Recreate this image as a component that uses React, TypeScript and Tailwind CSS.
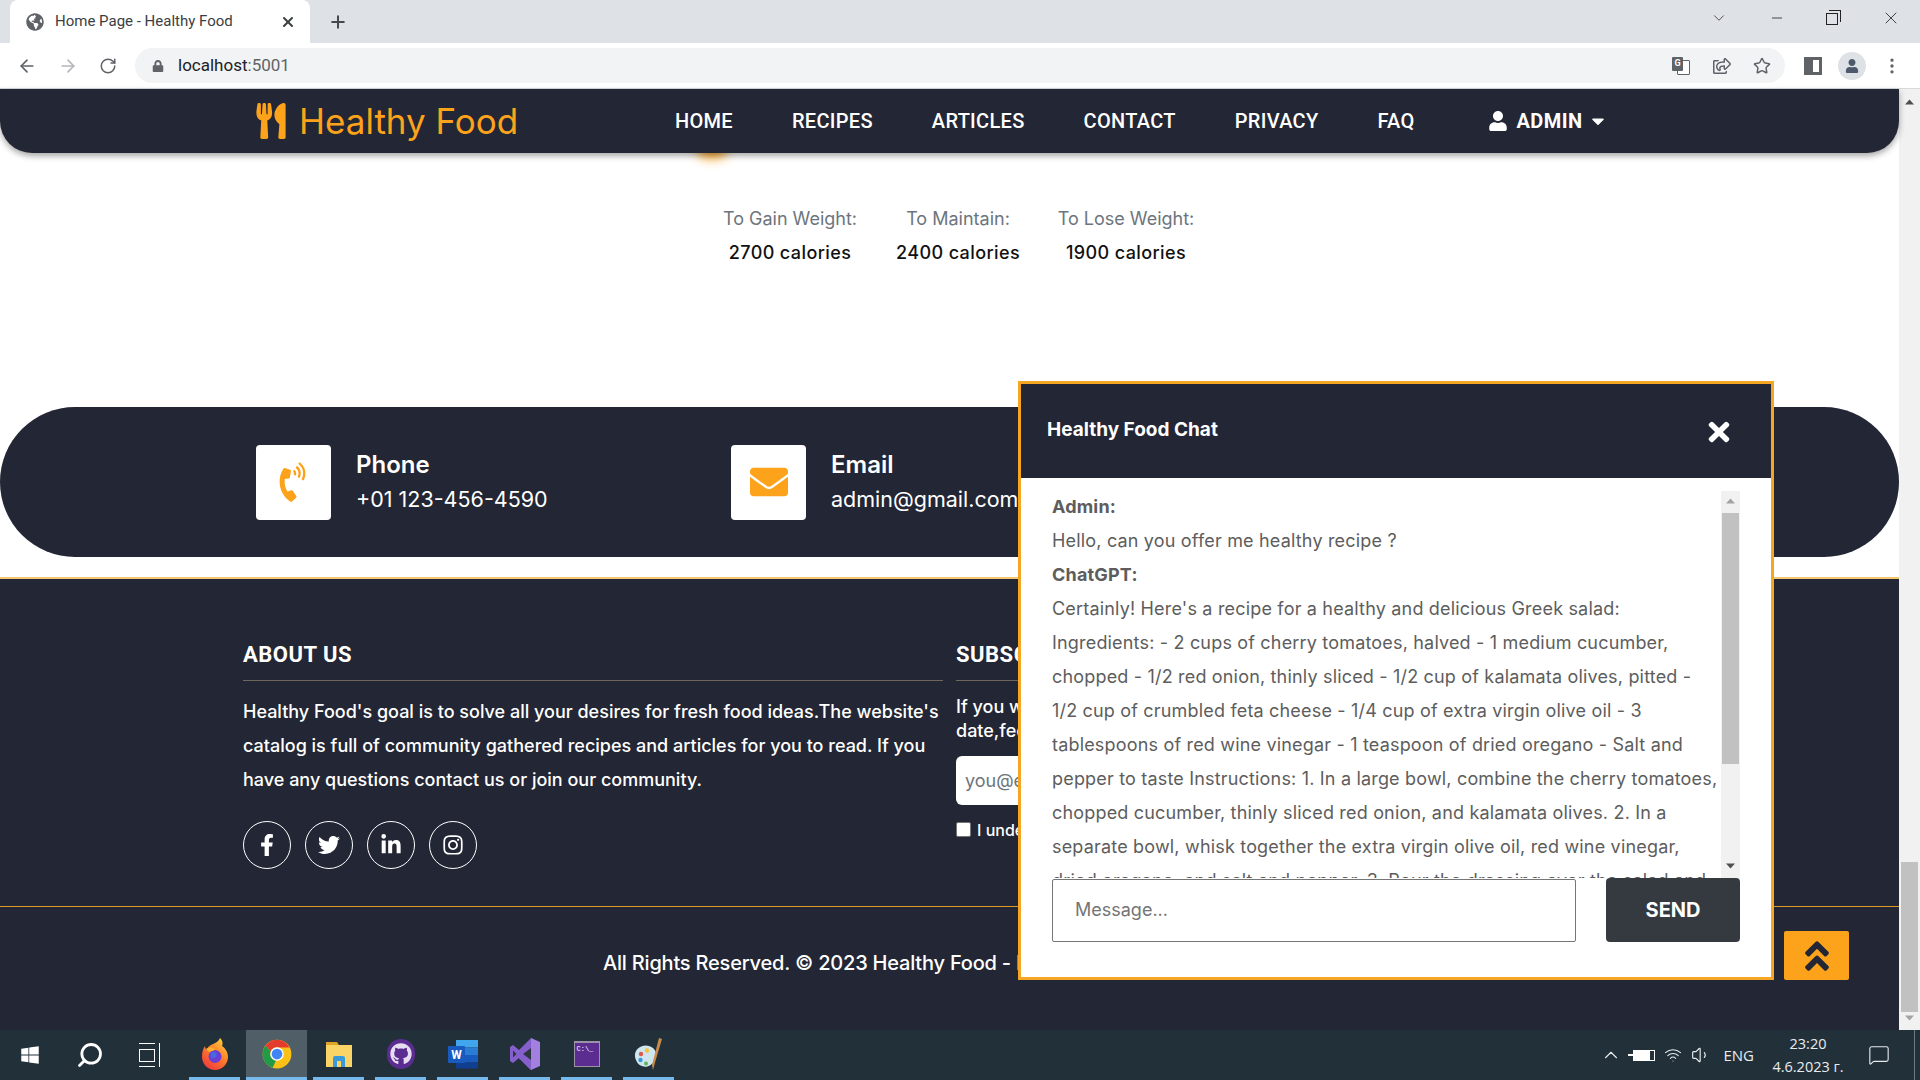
import React from 'react';
import {
  FaAngleDoubleUp, FaCaretDown, FaEnvelope, FaFacebookF, FaGithub, FaGlobeAmericas, FaInstagram,
  FaLinkedinIn, FaLock, FaPhoneVolume, FaRegShareSquare, FaTimes, FaTwitter, FaUser, FaUtensils, FaWindows,
} from 'react-icons/fa';
import { ArrowLeft, ArrowRight, ChevronDown, ChevronUp, EllipsisVertical, MessageSquare, Minus, Plus, RotateCw, Search, Star, Volume1, Wifi, X } from 'lucide-react';

const navLinks = ['HOME', 'RECIPES', 'ARTICLES', 'CONTACT', 'PRIVACY', 'FAQ'];

const calories = [
  { label: 'To Gain Weight:', value: '2700 calories' },
  { label: 'To Maintain:', value: '2400 calories' },
  { label: 'To Lose Weight:', value: '1900 calories' },
];

const aboutLines = [
  "Healthy Food's goal is to solve all your desires for fresh food ideas.The website's",
  'catalog is full of community gathered recipes and articles for you to read. If you',
  'have any questions contact us or join our community.',
];

const answerLines = [
  "Certainly! Here's a recipe for a healthy and delicious Greek salad:",
  'Ingredients: - 2 cups of cherry tomatoes, halved - 1 medium cucumber,',
  'chopped - 1/2 red onion, thinly sliced - 1/2 cup of kalamata olives, pitted -',
  '1/2 cup of crumbled feta cheese - 1/4 cup of extra virgin olive oil - 3',
  'tablespoons of red wine vinegar - 1 teaspoon of dried oregano - Salt and',
  'pepper to taste Instructions: 1. In a large bowl, combine the cherry tomatoes,',
  'chopped cucumber, thinly sliced red onion, and kalamata olives. 2. In a',
  'separate bowl, whisk together the extra virgin olive oil, red wine vinegar,',
  'dried oregano, and salt and pepper. 3. Pour the dressing over the salad and',
];

const socials = [FaFacebookF, FaTwitter, FaLinkedinIn, FaInstagram];

const Triangle = ({ up, className }: { up?: boolean; className: string }) => (
  <svg width="9" height="6" viewBox="0 0 9 6" className={className}>
    <path d={up ? 'M4.5 0.5 9 5.5H0z' : 'M0 0.5h9L4.5 5.5z'} fill="currentColor" />
  </svg>
);

const Firefox = () => (
  <svg width="30" height="34" viewBox="0 0 30 34">
    <defs>
      <linearGradient id="ff" x1="0.8" y1="0" x2="0.2" y2="1">
        <stop offset="0" stopColor="#ffd23a" />
        <stop offset="0.5" stopColor="#ff7a2b" />
        <stop offset="1" stopColor="#f0353f" />
      </linearGradient>
    </defs>
    <path d="M20 1c3 3 3 6 2 8 3 2 6 6 6 11 0 7-6 13-13 13S2 27 2 20c0-5 1-8 3-11 0 2 1 3 2 4 1-4 4-5 6-6 3-1 6-3 7-6z" fill="url(#ff)" />
    <circle cx="15" cy="19.5" r="6.5" fill="#6b3fd4" />
    <circle cx="13.5" cy="18" r="3" fill="#3d6fe0" />
    <path d="M6 12c3-2 7-2 9 1l-6 2z" fill="#ffb02e" />
  </svg>
);

const Chrome = () => (
  <svg width="30" height="30" viewBox="0 0 24 24">
    <circle cx="12" cy="12" r="11.5" fill="#fbc116" />
    <path d="M12 .5A11.5 11.5 0 0 1 22 6.75H12a5.25 5.25 0 0 0-5 3.5L2.8 5.1A11.5 11.5 0 0 1 12 .5z" fill="#e33b2e" />
    <path d="M2.8 5.1 7 10.25a5.25 5.25 0 0 0 4.2 7L8.5 23A11.5 11.5 0 0 1 2.8 5.1z" fill="#229a47" />
    <circle cx="12" cy="12" r="5.4" fill="#fff" />
    <circle cx="12" cy="12" r="4.3" fill="#3f85f3" />
  </svg>
);

const FolderIcon = () => (
  <svg width="30" height="30" viewBox="0 0 30 30">
    <path d="M2 3h11l2 3h-13z" fill="#e0a526" />
    <rect x="2" y="6" width="26" height="22" fill="#fbd467" />
    <path d="M9 28v-9a2 2 0 0 1 2-2h8a2 2 0 0 1 2 2v9h-4v-6h-4v6z" fill="#3a9ad9" />
  </svg>
);

const Word = () => (
  <svg width="30" height="32" viewBox="0 0 30 32">
    <rect x="8" y="2" width="22" height="7.5" fill="#41a5ee" />
    <rect x="8" y="9.5" width="22" height="7.5" fill="#2b7cd3" />
    <rect x="8" y="17" width="22" height="7.5" fill="#185abd" />
    <rect x="8" y="24.5" width="22" height="6" fill="#103f91" />
    <rect x="0" y="8" width="17" height="17" rx="1" fill="#185abd" />
    <text x="8.5" y="21" textAnchor="middle" fontSize="12" fontWeight="700" fill="#fff" fontFamily="Roboto, sans-serif">W</text>
  </svg>
);

const VisualStudio = () => (
  <svg width="30" height="34" viewBox="0 0 30 34">
    <path d="M21 1 30 5v24l-9 4-12-12 12-9z" fill="#a37fe0" />
    <path d="M21 1v32L9 21 3 26 0 24V10l3-2 6 5z" fill="#8560cc" />
    <path d="M21 11v12l-8-6z" fill="#2b3640" />
    <path d="M3 13.5v7l3.5-3.5z" fill="#2b3640" />
  </svg>
);

const Terminal = () => (
  <div className="w-[26px] h-[26px] bg-[#5c2d91] border-t-2 border-[#9a93a8] border-x border-b flex items-start pl-[2px] pt-[2px] text-[7px] leading-[8px] text-white font-['Liberation_Mono',monospace]">C:\_</div>
);

const Palette = () => (
  <svg width="30" height="38" viewBox="0 0 30 38">
    <path d="M1 22C0 13 9 9 15 11c7 2 9 9 6 14-3 6-9 8-13 6-4-1-6-5-7-9z" fill="#cfe6ee" />
    <circle cx="7" cy="19" r="2.2" fill="#e2574c" />
    <circle cx="13" cy="15.5" r="2.2" fill="#f5c33b" />
    <circle cx="6.5" cy="25" r="2.2" fill="#3a9ad9" />
    <circle cx="12" cy="28.5" r="2" fill="#63b35a" />
    <path d="M18 30 25 3l3 1-6 20-3 11z" fill="#c98b4a" />
  </svg>
);

const taskbarApps = [
  { icon: <Firefox />, active: false },
  { icon: <Chrome />, active: true },
  { icon: <FolderIcon />, active: false },
  { icon: <div className="w-7 h-[30px] rounded-full bg-[#5c2d91] flex items-center justify-center text-[#e6ddf2]"><FaGithub size={22} /></div>, active: false },
  { icon: <Word />, active: false },
  { icon: <VisualStudio />, active: false },
  { icon: <Terminal />, active: false },
  { icon: <Palette />, active: false },
];

const App = () => {
  return (
    <div className="w-[1920px] h-[1080px] flex flex-col overflow-hidden bg-white font-['Inter',sans-serif]">
      {/* Tab strip */}
      <div className="h-[43px] bg-[#dee1e6] flex items-end pl-[10px] text-[#45494e] font-['Roboto',sans-serif]">
        <div className="w-[300px] h-[43px] bg-white rounded-t-lg flex items-center pl-[16px] pr-[14px] text-[15px] mb-0">
          <FaGlobeAmericas size={18} className="text-[#5f6368] shrink-0" />
          <span className="ml-[11px] flex-1 text-[#3c4043]">Home Page - Healthy Food</span>
          <X size={16} strokeWidth={3} className="text-[#3c4043]" />
        </div>
        <div className="h-[43px] flex items-center ml-[18px]"><Plus size={20} strokeWidth={2.4} /></div>
        <div className="flex-1" />
        <div className="h-[36px] self-start flex items-center text-[#222]">
          <ChevronDown size={18} strokeWidth={1} className="mr-[41px]" />
          <Minus size={16} strokeWidth={1.2} className="mr-[41px]" />
          <div className="w-3 h-3 border border-[#222] relative mr-[43px] mt-[2px]">
            <div className="absolute -top-[4px] left-[2px] w-3 h-3 border-t border-r border-[#222]" />
          </div>
          <X size={20} strokeWidth={1} className="mr-[19px]" />
        </div>
      </div>

      {/* Toolbar */}
      <div className="h-[46px] bg-white flex items-center text-[#5f6368] border-b border-[#d7d9dc] font-['Roboto',sans-serif]">
        <ArrowLeft size={20} className="ml-[17px]" />
        <ArrowRight size={20} className="ml-[21px] text-[#b4b6b9]" />
        <RotateCw size={18} className="ml-[21px]" />
        <div className="ml-[18px] w-[1650px] h-[35px] rounded-full bg-[#f1f3f4] flex items-center pl-[17px] pr-[14px]">
          <FaLock size={12} className="text-[#5f6368]" />
          <span className="ml-[14px] text-[17px] text-[#202124]">localhost<span className="text-[#5f6368]">:5001</span></span>
          <div className="flex-1" />
          <div className="relative w-[18px] h-[18px]">
            <div className="absolute left-[5px] top-[3px] w-[13px] h-[15px] bg-white border border-[#5f6368] rounded-[1px]" />
            <div className="absolute left-0 top-0 w-[11px] h-[14px] bg-[#5f6368] text-white text-[9px] font-bold flex items-center justify-center rounded-[1px]">G</div>
          </div>
          <FaRegShareSquare size={18} className="ml-[23px]" />
          <Star size={18} className="ml-[22px]" strokeWidth={2} />
        </div>
        <div className="ml-[19px] w-[18px] h-[18px] border-[3px] border-l-[9px] border-[#5f6368]" />
        <div className="ml-[16px] w-[28px] h-[28px] rounded-full bg-[#dee1e6] flex items-center justify-center text-[#4c5a6b]"><FaUser size={14} /></div>
        <EllipsisVertical size={20} className="ml-[16px]" />
      </div>

      {/* Page */}
      <div className="relative flex-1 flex min-h-0">
        <div className="w-[1899px] flex flex-col">
          <header className="relative z-10 h-[64px] shrink-0 bg-[#232634] rounded-b-[32px] shadow-[0_3px_6px_rgba(0,0,0,0.35)] flex items-center pl-[253px] text-white">
            <FaUtensils size={36} className="text-[#fda31b]" />
            <span className="ml-[10px] w-[376px] text-[35px] text-[#fda31b] font-['Inter',sans-serif]">Healthy Food</span>
            <nav className="flex items-center gap-[59px] text-[20px] font-medium tracking-[0.3px] font-['Roboto',sans-serif]">
              {navLinks.map((link) => <a key={link}>{link}</a>)}
            </nav>
            <div className="ml-[73px] flex items-center font-bold text-[20px] tracking-[0.4px] font-['Roboto',sans-serif]">
              <FaUser size={20} />
              <span className="ml-[9px]">ADMIN</span>
              <FaCaretDown size={20} className="ml-[6px]" />
            </div>
          </header>

          {/* spinner glow peeking out under the navbar */}
          <div className="absolute left-[697px] top-[51px] w-[30px] h-[18px] rounded-full bg-[#fda31b] blur-[6px]" />

          <section className="pt-[49px] pl-[706px] flex shrink-0 text-[18px] leading-[34px] text-center">
            {calories.map((item) => (
              <div key={item.label} className="w-[168px]">
                <div className="text-[#6c757d]">{item.label}</div>
                <div className="font-medium text-[#111] tracking-[0.4px]">{item.value}</div>
              </div>
            ))}
          </section>

          <section className="mt-[137px] h-[150px] shrink-0 rounded-full bg-[#232634] flex items-center pl-[256px] text-white font-['Inter',sans-serif]">
            <div className="w-[475px] flex items-center">
              <div className="w-[75px] h-[75px] bg-white rounded-[4px] flex items-center justify-center text-[#fda31b]">
                <FaPhoneVolume size={37} className="-rotate-12" />
              </div>
              <div className="ml-[25px]">
                <div className="text-[24px] font-semibold leading-[34px]">Phone</div>
                <div className="text-[21.5px] leading-[34px]">+01 123-456-4590</div>
              </div>
            </div>
            <div className="flex items-center">
              <div className="w-[75px] h-[75px] bg-white rounded-[4px] flex items-center justify-center text-[#fda31b]">
                <FaEnvelope size={38} />
              </div>
              <div className="ml-[25px]">
                <div className="text-[24px] font-semibold leading-[34px]">Email</div>
                <div className="text-[21.5px] leading-[34px]">admin@gmail.com</div>
              </div>
            </div>
          </section>

          <footer className="mt-[20px] flex-1 bg-[#232634] border-t-2 border-[#f3c76f] text-white">
            <div className="h-[328px] border-b border-[#e09a27] pl-[243px] pt-[58px] flex">
              <div className="w-[700px]">
                <h4 className="text-[22px] font-bold leading-[36px] border-b border-[#6f665d] h-[44px] font-['Roboto',sans-serif] tracking-[0.5px]">ABOUT US</h4>
                <div className="mt-[14px] text-[18px] leading-[34px] font-medium">
                  {aboutLines.map((line) => <div key={line} className="whitespace-nowrap">{line}</div>)}
                </div>
                <div className="mt-[24px] flex gap-[14px]">
                  {socials.map((Icon, i) => (
                    <a key={i} className="w-12 h-12 rounded-full border border-white flex items-center justify-center">
                      <Icon size={22} />
                    </a>
                  ))}
                </div>
              </div>
              <div className="ml-[13px] w-[400px]">
                <h4 className="text-[22px] font-bold leading-[36px] border-b border-[#6f665d] h-[44px] font-['Roboto',sans-serif] tracking-[0.5px]">SUBSCRIBE</h4>
                <div className="mt-[14px] text-[18px] leading-[24px] font-medium">If you want to stay up to<br />date,feel free to subscribe</div>
                <div className="mt-[13px] h-[49px] bg-white rounded-[6px] flex items-center pl-[9px] text-[#6c757d] text-[18px]">you@email.com</div>
                <label className="mt-[13px] flex items-center text-[16px] font-medium">
                  <span className="w-[15px] h-[15px] -mt-[2px] bg-white rounded-[2px] border border-[#767676]" />
                  <span className="ml-[6px]">I understand</span>
                </label>
              </div>
            </div>
            <div className="pl-[603px] pt-[40px] text-[20px] leading-[32px] font-medium tracking-[-0.2px]">All Rights Reserved. © 2023 Healthy Food - Privacy Policy</div>
          </footer>
        </div>

        {/* Page scrollbar */}
        <div className="w-[21px] bg-[#f1f1f1] flex flex-col items-center text-[#505050]">
          <Triangle up className="mt-[10px]" />
          <div className="mt-[757px] w-[17px] h-[150px] bg-[#c1c1c1]" />
          <Triangle className="mt-[3px] text-[#a3a3a3]" />
        </div>

        {/* Back to top */}
        <button className="absolute left-[1784px] top-[842px] w-[65px] h-[49px] bg-[#fda31b] rounded-[2px] flex items-center justify-center text-[#232634]">
          <FaAngleDoubleUp size={38} />
        </button>

        {/* Chat window */}
        <div className="absolute left-[1018px] top-[292px] w-[756px] h-[599px] bg-white border-[3px] border-[#f5a623] flex flex-col z-20">
          <div className="h-[94px] shrink-0 bg-[#232634] flex items-center justify-between pl-[26px] pr-[37px] text-white">
            <span className="text-[19px] font-bold -mt-[1px]">Healthy Food Chat</span>
            <FaTimes size={30} className="mt-[1px]" />
          </div>
          <div className="h-[401px] shrink-0 pt-[13px] pl-[31px] pr-[31px] flex text-[18px] leading-[34px] text-[#5d5d5d] tracking-[0.18px]">
            <div className="flex-1 h-[388px] overflow-hidden -mt-[1px]">
              <div className="font-bold">Admin:</div>
              <div>Hello, can you offer me healthy recipe ?</div>
              <div className="font-bold">ChatGPT:</div>
              {answerLines.map((line) => <div key={line} className="whitespace-nowrap">{line}</div>)}
            </div>
            <div className="w-[19px] h-[388px] bg-[#f1f1f1] flex flex-col items-center text-[#a3a3a3]">
              <Triangle up className="mt-[7px]" />
              <div className="mt-[9px] w-[17px] h-[251px] bg-[#c1c1c1]" />
              <Triangle className="mt-[99px] text-[#505050]" />
            </div>
          </div>
          <div className="flex items-start pl-[31px] pr-[31px]">
            <div className="w-[524px] h-[63px] border border-[#767676] rounded-[2px] flex items-center pl-[22px] pb-[2px] text-[18px] text-[#757575]">Message...</div>
            <button className="ml-[30px] w-[134px] h-[64px] -mt-[1px] bg-[#343a40] rounded-[4px] text-white text-[20px] font-bold">SEND</button>
          </div>
        </div>
      </div>

      {/* Windows taskbar */}
      <div className="h-[50px] bg-[#22303a] flex items-stretch text-white font-['Open_Sans',sans-serif]">
        <div className="w-[65px] flex items-center pl-[20px]"><FaWindows size={20} /></div>
        <div className="w-[50px] flex items-center justify-center"><Search size={28} strokeWidth={2.4} className="-scale-x-100" /></div>
        <div className="w-[74px] flex items-center pl-[24px]">
          <div className="w-[16px] h-[24px] border-y border-white flex items-center"><div className="w-full h-[13px] border border-white" /></div>
          <div className="ml-[4px] w-px h-[24px] bg-white" />
        </div>
        <div className="flex gap-[11px]">
          {taskbarApps.map((app, i) => (
            <div key={i} className={`${app.active ? 'w-[61px] bg-[#505e68] -mx-[5px]' : 'w-[51px]'} flex items-center justify-center border-b-[3px] border-[#76b9ed]`}>
              {app.icon}
            </div>
          ))}
        </div>
        <div className="flex-1" />
        <div className="flex items-center text-[#e8ecef]">
          <ChevronUp size={22} strokeWidth={1.2} />
          <div className="ml-[11px] relative w-[22px] h-[11px] border border-white flex"><div className="w-[16px] bg-white" /><div className="absolute -left-[6px] top-[3px] w-[5px] h-[2px] bg-white" /></div>
          <Wifi size={18} className="ml-[9px]" strokeWidth={1.4} />
          <Volume1 size={20} className="ml-[9px]" strokeWidth={1.4} />
          <span className="ml-[12px] text-[15px]">ENG</span>
          <div className="ml-[18px] w-[72px] text-center text-[14.5px] leading-[23px]">
            <div>23:20</div>
            <div>4.6.2023 г.</div>
          </div>
          <MessageSquare size={22} strokeWidth={1.2} className="ml-[24px]" />
          <div className="ml-[24px] w-px h-full bg-[#6e7a83]" />
          <div className="w-[5px]" />
        </div>
      </div>
    </div>
  );
};

export default App;
